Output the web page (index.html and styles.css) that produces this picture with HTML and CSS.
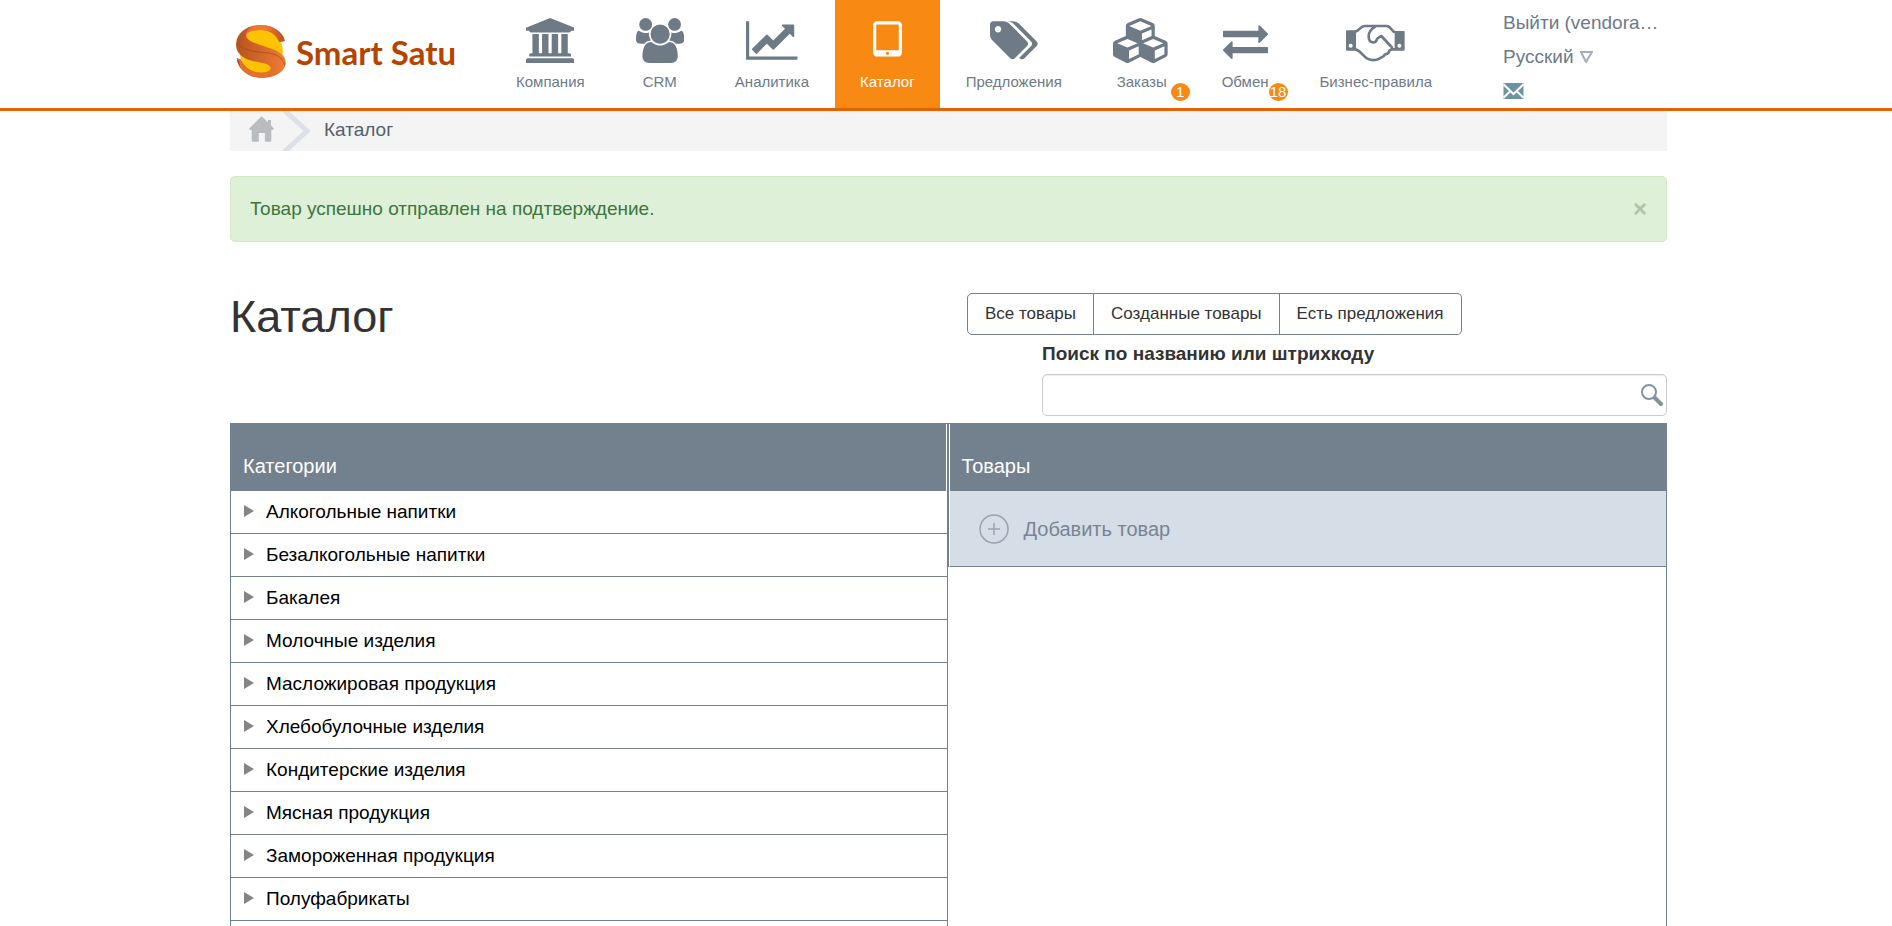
FILE: index.html
```html
<!DOCTYPE html>
<html lang="ru">
<head>
<meta charset="utf-8">
<title>Каталог</title>
<link rel="stylesheet" href="styles.css">
</head>
<body>
<header class="topbar">
  <div class="container topbar-inner">
    <a class="logo" href="#">
      <svg class="logo-mark" viewBox="0 0 150 160" aria-hidden="true">
        <defs>
          <linearGradient id="band" x1="0" y1="0" x2="1" y2="0"><stop offset="0" stop-color="#b4531f"/><stop offset="1" stop-color="#f27c34"/></linearGradient>
          <linearGradient id="top" x1="0" y1="0" x2="1" y2="0"><stop offset="0" stop-color="#e8742f"/><stop offset=".5" stop-color="#ee7a33"/><stop offset="1" stop-color="#b4531f"/></linearGradient>
        </defs>
        <ellipse cx="76" cy="80" rx="65" ry="70" fill="#fdc300"/>
        <path d="M0 56C2 20 38 0 74 0C112 0 142 22 147 48L130 51C120 26 98 14 72 15C48 16 28 20 30 32C34 52 62 56 95 68C130 78 150 92 150 116C146 144 112 160 76 160C38 158 6 136 2 100L14 104C26 130 50 146 80 144C100 142 108 134 103 126C92 112 62 114 34 104C10 92-2 78 0 56Z" fill="url(#band)"/>
        <path d="M30 34C26 18 48 0 74 0C112 0 142 22 147 48L130 51C120 26 98 14 72 15C48 16 34 21 30 34Z" fill="url(#top)"/>
        <path d="M2 100L14 104C26 130 50 146 80 144C100 142 108 134 103 124C112 146 98 160 76 160C38 158 6 136 2 100Z" fill="#e5702d"/>
        <path d="M2 52C14 76 50 80 92 84C122 88 142 98 146 122" fill="none" stroke="#9f4719" stroke-width="2"/>
        <path d="M2 102L12 128L8 110Z" fill="#6d1f55"/>
      </svg>
      <span class="logo-text">Smart Satu</span>
    </a>
    <nav class="menu">
      <a class="menu-item" href="#">
        <svg class="menu-icon" viewBox="0 0 1920 1792"><path d="M960 0l960 384v128h-128q0 26-20.500 45t-48.500 19h-1526q-28 0-48.500-19t-20.500-45h-128v-128zm-704 640h256v768h128v-768h256v768h128v-768h256v768h128v-768h256v768h59q28 0 48.500 19t20.500 45v64h-1664v-64q0-26 20.500-45t48.500-19h59v-768zm1595 960q28 0 48.500 19t20.500 45v128h-1920v-128q0-26 20.500-45t48.500-19h1782z"/></svg>
        <span>Компания</span>
      </a>
      <a class="menu-item" href="#">
        <svg class="menu-icon" viewBox="0 0 1920 1792"><path d="M593 896q-162 5-265 128h-134q-82 0-138-40.500t-56-118.500q0-353 124-353 6 0 43.500 21t97.500 42.500 119 21.500q67 0 133-23-5 37-5 66 0 139 81 256zm1071 637q0 120-73 189.500t-194 69.500h-874q-121 0-194-69.500t-73-189.500q0-53 3.500-103.500t14-109 26.500-108.500 43-97.500 62-81 85.500-53.500 111.500-20q10 0 43 21.500t73 48 107 48 135 21.500 135-21.500 107-48 73-48 43-21.500q61 0 111.500 20t85.500 53.500 62 81 43 97.500 26.500 108.500 14 109 3.500 103.500zm-1024-1277q0 106-75 181t-181 75-181-75-75-181 75-181 181-75 181 75 75 181zm704 384q0 159-112.500 271.500t-271.500 112.500-271.500-112.500-112.500-271.500 112.500-271.500 271.500-112.500 271.500 112.500 112.500 271.500zm576 225q0 78-56 118.500t-138 40.500h-134q-103-123-265-128 81-117 81-256 0-29-5-66 66 23 133 23 59 0 119-21.500t97.500-42.500 43.500-21q124 0 124 353zm-128-609q0 106-75 181t-181 75-181-75-75-181 75-181 181-75 181 75 75 181z"/></svg>
        <span>CRM</span>
      </a>
      <a class="menu-item" href="#">
        <svg class="menu-icon" viewBox="0 0 2048 1792"><path d="M2048 1536v128h-2048v-1536h128v1408h1920zm-128-1248v435q0 21-19.500 29.500t-35.500-7.500l-121-121-633 633q-10 10-23 10t-23-10l-233-233-416 416-192-192 585-585q10-10 23-10t23 10l233 233 464-464-121-121q-16-16-7.500-35.500t29.500-19.500h435q14 0 23 9t9 23z"/></svg>
        <span>Аналитика</span>
      </a>
      <a class="menu-item menu-item-active" href="#" aria-current="page">
        <svg class="menu-icon" viewBox="0 0 1792 1792"><path d="M960 1408q0-26-19-45t-45-19-45 19-19 45 19 45 45 19 45-19 19-45zm384-160v-960q0-13-9.500-22.500t-22.500-9.500h-832q-13 0-22.500 9.500t-9.500 22.500v960q0 13 9.500 22.500t22.500 9.500h832q13 0 22.500-9.500t9.500-22.500zm128-960v1088q0 66-47 113t-113 47h-832q-66 0-113-47t-47-113v-1088q0-66 47-113t113-47h832q66 0 113 47t47 113z"/></svg>
        <span>Каталог</span>
      </a>
      <a class="menu-item" href="#">
        <svg class="menu-icon" viewBox="0 0 1920 1792"><path d="M448 448q0-53-37.500-90.500t-90.500-37.500-90.500 37.500-37.500 90.500 37.500 90.500 90.500 37.500 90.500-37.500 37.500-90.500zm1067 576q0 53-37 90l-491 492q-39 37-91 37-53 0-90-37l-715-716q-38-37-64.500-101t-26.500-117v-416q0-52 38-90t90-38h416q53 0 117 26.500t102 64.500l715 714q37 39 37 91zm384 0q0 53-37 90l-491 492q-39 37-91 37-36 0-59-14t-53-45l470-470q37-37 37-90 0-52-37-91l-715-714q-38-38-102-64.500t-117-26.500h224q53 0 117 26.500t102 64.500l715 714q37 39 37 91z"/></svg>
        <span>Предложения</span>
      </a>
      <a class="menu-item" href="#">
        <svg class="menu-icon" viewBox="0 0 2304 1792"><path d="M640 1632l384-192v-314l-384 164v342zm-64-454l404-173-404-173-404 173zm1088 454l384-192v-314l-384 164v342zm-64-454l404-173-404-173-404 173zm-448-293l384-165v-266l-384 164v267zm-64-379l441-189-441-189-441 189zm1088 518v416q0 36-19 67t-52 47l-448 224q-25 14-57 14t-57-14l-448-224q-4-2-7-4-2 2-7 4l-448 224q-25 14-57 14t-57-14l-448-224q-33-16-52-47t-19-67v-416q0-38 21.500-70t56.500-48l434-186v-400q0-38 21.500-70t56.500-48l448-192q23-10 50-10t50 10l448 192q35 16 56.500 48t21.500 70v400l434 186q36 16 57 48t21 70z"/></svg>
        <span>Заказы</span>
        <span class="badge">1</span>
      </a>
      <a class="menu-item" href="#">
        <svg class="menu-icon" viewBox="0 0 1792 1792"><path d="M1792 1184v192q0 13-9.500 22.500t-22.500 9.500h-1376v192q0 13-9.500 22.500t-22.500 9.500q-12 0-24-10l-319-320q-9-9-9-22 0-14 9-23l320-320q9-9 23-9 13 0 22.500 9.500t9.500 22.500v192h1376q13 0 22.500 9.500t9.500 22.500zm0-544q0 14-9 23l-320 320q-9 9-23 9-13 0-22.500-9.500t-9.500-22.500v-192h-1376q-13 0-22.500-9.500t-9.500-22.500v-192q0-13 9.500-22.500t22.500-9.500h1376v-192q0-14 9-23t23-9q12 0 24 10l319 319q9 9 9 23z"/></svg>
        <span>Обмен</span>
        <span class="badge">18</span>
      </a>
      <a class="menu-item" href="#">
        <svg class="menu-icon" viewBox="0 0 176 135">
          <path fill-rule="evenodd" d="M3 37H30V98H3Q0 98 0 95V40Q0 37 3 37ZM14 77a6 6 0 1 0 .1 0ZM146 39H173Q176 39 176 42V95Q176 98 173 98H146ZM160 77a6 6 0 1 0 .1 0Z"/>
          <path class="hand-line" d="M28 41C40 40 42 24 56 24H122C136 24 136 42 148 42M88 26C78 32 68 42 68 54C68 78 88 76 92 66C94 58 100 58 106 54L134 84C142 90 138 96 130 98C130 106 122 108 116 110C114 118 104 118 100 122C88 128 76 128 64 122C50 114 42 96 28 94M134 94L148 94"/>
        </svg>
        <span>Бизнес-правила</span>
      </a>
    </nav>
    <div class="account">
      <a class="account-link" href="#">Выйти (vendora…</a>
      <button class="account-lang" type="button">Русский
        <svg class="lang-arrow" viewBox="0 0 13 12" aria-hidden="true"><path d="M1 1H12L6 11Z"/></svg>
      </button>
      <a class="account-mail" href="#" aria-label="Сообщения">
        <svg class="mail-icon" viewBox="0 0 60 48" aria-hidden="true"><rect width="60" height="48"/><path d="M0 4L30 33L60 4M0 44L21 24M60 44L39 24"/></svg>
      </a>
    </div>
  </div>
</header>

<main class="container page">
  <nav class="crumbs" aria-label="Навигация">
    <a class="crumb-home" href="#" aria-label="Главная"><svg class="home-icon" viewBox="0 0 74 76" aria-hidden="true"><path d="M37 0L56 18V11H65V27L74 37L70 41H66V73Q66 76 63 76H47V50H29V76H11Q8 76 8 73V41H3L0 37Z"/></svg></a>
    <svg class="crumb-arrow" viewBox="0 0 28 40" aria-hidden="true"><path d="M2-1L25 20L2 41"/></svg>
    <span>Каталог</span>
  </nav>

  <div class="alert" role="alert">
    <span>Товар успешно отправлен на подтверждение.</span>
    <button class="alert-close" type="button" aria-label="Закрыть">×</button>
  </div>

  <div class="heading">
    <h1 class="title">Каталог</h1>
    <div class="tools">
      <div class="filters">
        <button class="filter" type="button">Все товары</button>
        <button class="filter" type="button">Созданные товары</button>
        <button class="filter" type="button">Есть предложения</button>
      </div>
      <form class="search">
        <label class="search-label" for="query">Поиск по названию или штрихкоду</label>
        <div class="search-box">
          <input class="search-input" id="query" type="text">
          <button class="search-button" type="button" aria-label="Найти"><svg class="search-icon" viewBox="0 0 22 22" aria-hidden="true"><circle cx="8" cy="8" r="7"/><path d="M14 14L20 20"/></svg></button>
        </div>
      </form>
    </div>
  </div>

  <div class="panes">
    <section class="pane pane-categories">
      <h2 class="pane-title">Категории</h2>
      <ul class="categories">
        <li><button class="category" type="button">Алкогольные напитки</button></li>
        <li><button class="category" type="button">Безалкогольные напитки</button></li>
        <li><button class="category" type="button">Бакалея</button></li>
        <li><button class="category" type="button">Молочные изделия</button></li>
        <li><button class="category" type="button">Масложировая продукция</button></li>
        <li><button class="category" type="button">Хлебобулочные изделия</button></li>
        <li><button class="category" type="button">Кондитерские изделия</button></li>
        <li><button class="category" type="button">Мясная продукция</button></li>
        <li><button class="category" type="button">Замороженная продукция</button></li>
        <li><button class="category" type="button">Полуфабрикаты</button></li>
      </ul>
    </section>
    <section class="pane pane-goods">
      <div class="goods-top">
        <h2 class="pane-title">Товары</h2>
        <button class="add" type="button">
          <svg class="add-icon" viewBox="0 0 30 30" aria-hidden="true"><circle cx="15" cy="15" r="14"/><path d="M15 9V21M9 15H21"/></svg>
          Добавить товар
        </button>
      </div>
    </section>
  </div>
</main>
</body>
</html>
```
FILE: styles.css
```css
* { box-sizing: border-box; }

body {
  margin: 0;
  height: 100vh;
  overflow: hidden;
  display: flex;
  flex-direction: column;
  background: #fff;
  color: #333;
  font: 19px/26px "Liberation Sans", Arial, sans-serif;
}

button, input { font: inherit; color: inherit; }
button { background: none; border: 0; padding: 0; cursor: pointer; }
a { color: inherit; text-decoration: none; }

.container {
  width: 100%;
  max-width: 1442px;
  margin: 0 auto;
  padding-left: 5px;
}

.topbar { flex: none; border-bottom: 3px solid #e86100; color: #6e7a86; }
.topbar-inner { display: flex; height: 108px; }

.logo {
  display: flex;
  align-items: center;
  gap: 10px;
  flex: none;
  width: 220px;
  height: 103px;
  margin-left: 6px;
}
.logo-mark { flex: none; width: 50px; height: 53px; }
.logo-text {
  color: #b44400;
  font: 700 33px/40px Lato, sans-serif;
  white-space: nowrap;
}

.menu { display: flex; gap: 1px; margin-left: 35px; }
.menu-item {
  position: relative;
  display: flex;
  flex-direction: column;
  align-items: center;
  padding: 18px 25px 0;
  font-size: 15px;
  line-height: 20px;
  white-space: nowrap;
}
.menu-item-active { background: #f88912; color: #fff; }
.menu-icon { height: 45px; margin-bottom: 9px; fill: currentColor; }
.hand-line { fill: none; stroke: currentColor; stroke-width: 8; stroke-linejoin: round; }
.badge {
  position: absolute;
  right: 6px;
  bottom: 7px;
  width: 19px;
  height: 18px;
  border-radius: 50%;
  background: #f88912;
  color: #fff;
  line-height: 18px;
  text-align: center;
}

.account { width: 154px; margin: 6px 10px 0 auto; line-height: 34px; }
.account-link { display: block; white-space: nowrap; }
.account-lang { display: flex; align-items: center; gap: 6px; height: 34px; }
.lang-arrow { width: 13px; height: 12px; fill: none; stroke: #a3adba; stroke-width: 2; }
.account-mail { display: flex; align-items: center; height: 34px; }
.mail-icon { width: 21px; height: 16px; fill: #6b93a1; stroke: #fff; stroke-width: 6; }
.mail-icon path { fill: none; }
.mail-icon rect { stroke: none; }

.page { flex: 1; display: flex; flex-direction: column; }

.crumbs {
  display: flex;
  height: 40px;
  padding-left: 19px;
  background: #f4f4f4;
  color: #55606c;
  line-height: 38px;
}
.crumb-home { width: 33px; padding-top: 5px; line-height: 0; }
.home-icon { width: 25px; height: 26px; fill: #b9bdc0; }
.crumb-arrow { width: 28px; height: 40px; margin-right: 14px; fill: none; stroke: #dce1e7; stroke-width: 5; }

.alert {
  display: flex;
  justify-content: space-between;
  align-items: center;
  height: 66px;
  margin-top: 25px;
  padding: 0 19px;
  border: 1px solid #d0e9c6;
  border-radius: 5px;
  background: #dff0d8;
  color: #3c763d;
}
.alert-close { color: #b0c4ab; font-size: 24px; font-weight: bold; }

.heading { display: flex; justify-content: space-between; margin-top: 51px; }
.title { margin: 0; font-size: 45px; font-weight: normal; line-height: 48px; }
.tools { width: 700px; }
.filters { display: flex; }
.filter {
  height: 42px;
  padding: 0 17px;
  border: 1px solid #73808d;
  border-left-width: 0;
  font-size: 17px;
}
.filter:first-child { border-left-width: 1px; border-radius: 5px 0 0 5px; }
.filter:last-child { border-radius: 0 5px 5px 0; }

.search { margin-left: 75px; padding-top: 6px; }
.search-label { display: block; height: 33px; font-weight: bold; }
.search-box { position: relative; }
.search-input {
  display: block;
  width: 100%;
  height: 42px;
  padding: 0 40px 0 12px;
  border: 1px solid #ccc;
  border-radius: 5px;
  box-shadow: inset 0 1px 1px rgba(0, 0, 0, .08);
}
.search-button { position: absolute; top: 10px; right: 4px; width: 22px; height: 22px; line-height: 0; }
.search-icon { width: 22px; height: 22px; fill: none; stroke: #8492a2; stroke-width: 2; }
.search-icon path { stroke-width: 4; stroke-linecap: round; }

.panes { flex: 1; display: grid; grid-template-columns: calc(50% - 1px) 1fr; margin-top: 7px; }
.pane { border-top: 1px solid #73808d; border-right: 1px solid #73808d; }
.pane-categories { border-left: 1px solid #73808d; }
.pane-title {
  height: 67px;
  margin: 0;
  padding: 29px 12px 0;
  background: #73808d;
  color: #fff;
  font-size: 20px;
  font-weight: normal;
  line-height: 26px;
}
.pane-categories .pane-title { border-right: 1px solid #fff; }

.categories { margin: 0; padding: 0; list-style: none; }
.category {
  display: flex;
  align-items: center;
  gap: 12px;
  width: 100%;
  height: 43px;
  padding: 0 0 1px 13px;
  border-bottom: 1px solid #73808d;
  color: #000;
}
.category::before {
  content: "";
  margin-bottom: 2px;
  border: 6px solid transparent;
  border-left: 10px solid #858585;
  border-right: 0;
}

.goods-top { border-left: 1px solid #73808d; }
.pane-goods .pane-title { border-left: 1px solid #fff; }
.add {
  display: flex;
  align-items: center;
  gap: 15px;
  width: 100%;
  height: 76px;
  padding-left: 29px;
  border-left: 1px solid #fff;
  border-bottom: 1px solid #73808d;
  background: #d5dde6;
  color: #788494;
  font-size: 20px;
}
.add-icon { width: 30px; height: 30px; fill: none; stroke: #98a4b2; stroke-width: 1.500; }
```
